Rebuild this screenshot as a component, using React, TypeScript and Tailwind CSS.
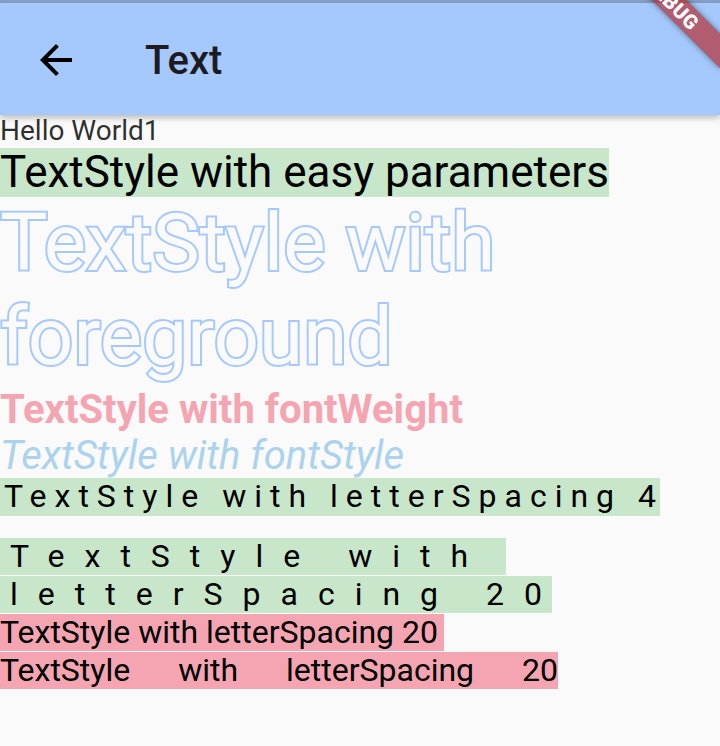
const roboto = { fontFamily: 'Roboto, "Noto Sans", sans-serif' };

function BackArrow() {
    return (
        <svg width="48" height="48" viewBox="0 0 24 24" fill="#000">
            <path d="M20 11H7.83l5.59-5.59L12 4l-8 8 8 8 1.41-1.41L7.83 13H20v-2z" />
        </svg>
    );
}

function DebugBanner() {
    return (
        <div className="absolute top-0 right-0 w-[200px] h-[200px] overflow-hidden pointer-events-none z-20">
            <div className="absolute left-[72px] top-[-9px] w-[160px] h-[24px] rotate-45 bg-[#b71c1c]/[0.63] shadow-[0_0_6px_rgba(0,0,0,0.5)] flex items-center justify-center">
                <span className="text-white text-[20px] font-black leading-none tracking-[0.5px]">DEBUG</span>
            </div>
        </div>
    );
}

export default function App() {
    return (
        <div className="relative w-[720px] h-[746px] bg-[#fafafa] overflow-hidden" style={roboto}>
            <div className="h-[3px] bg-[#87a0c8]" />
            <header className="relative z-10 h-[112px] bg-[#a6c9fd] flex items-center shadow-[0_3px_6px_rgba(0,0,0,0.25)]">
                <div className="ml-[32px] mt-[2px] flex items-center">
                    <BackArrow />
                </div>
                <h1 className="ml-[65px] mt-[4px] text-[40px] font-medium text-[#1d1b20] leading-none">Text</h1>
            </header>

            <main className="flex flex-col items-start">
                <p className="text-[28px] leading-[32.8px] text-black/[0.82]">Hello World1</p>
                <p className="text-[44px] leading-[49.2px] text-black bg-[#c8e6c9]">TextStyle with easy parameters</p>
                <p className="text-[80px] leading-[93.75px] text-[#fafafa] [-webkit-text-stroke:4px_#a6c9fd] [paint-order:stroke_fill]">TextStyle with foreground</p>
                <p className="text-[40px] leading-[46.9px] font-bold text-[#f4a5b1] pt-[2px]">TextStyle with fontWeight</p>
                <p className="text-[40px] leading-[46.9px] italic text-[#abd3ee] mt-[-2px] pt-[2px]">TextStyle with fontStyle</p>

                <div className="mt-[-2px] text-[32px] leading-[37.5px] text-black bg-[#c8e6c9] pl-[4px]">
                    <span className="inline-block tracking-[8px] mr-[-4px]">TextStyle with letterSpacing 4</span>
                </div>

                <div className="mt-[22px] flex flex-col items-start gap-[1px] text-[32px] leading-[37px] text-black">
                    <div className="bg-[#c8e6c9] pl-[10px]">
                        <span className="inline-block tracking-[20px] whitespace-pre mr-[-10px]">TextStyle with </span>
                    </div>
                    <div className="bg-[#c8e6c9] pl-[10px]">
                        <span className="inline-block tracking-[20px] mr-[-10px]">letterSpacing 20</span>
                    </div>
                    <div className="bg-[#f4a5b1] pr-[6px]">TextStyle with letterSpacing 20</div>
                    <div className="bg-[#f4a5b1] [word-spacing:40px]">TextStyle with letterSpacing 20</div>
                </div>
            </main>

            <DebugBanner />
        </div>
    );
}
